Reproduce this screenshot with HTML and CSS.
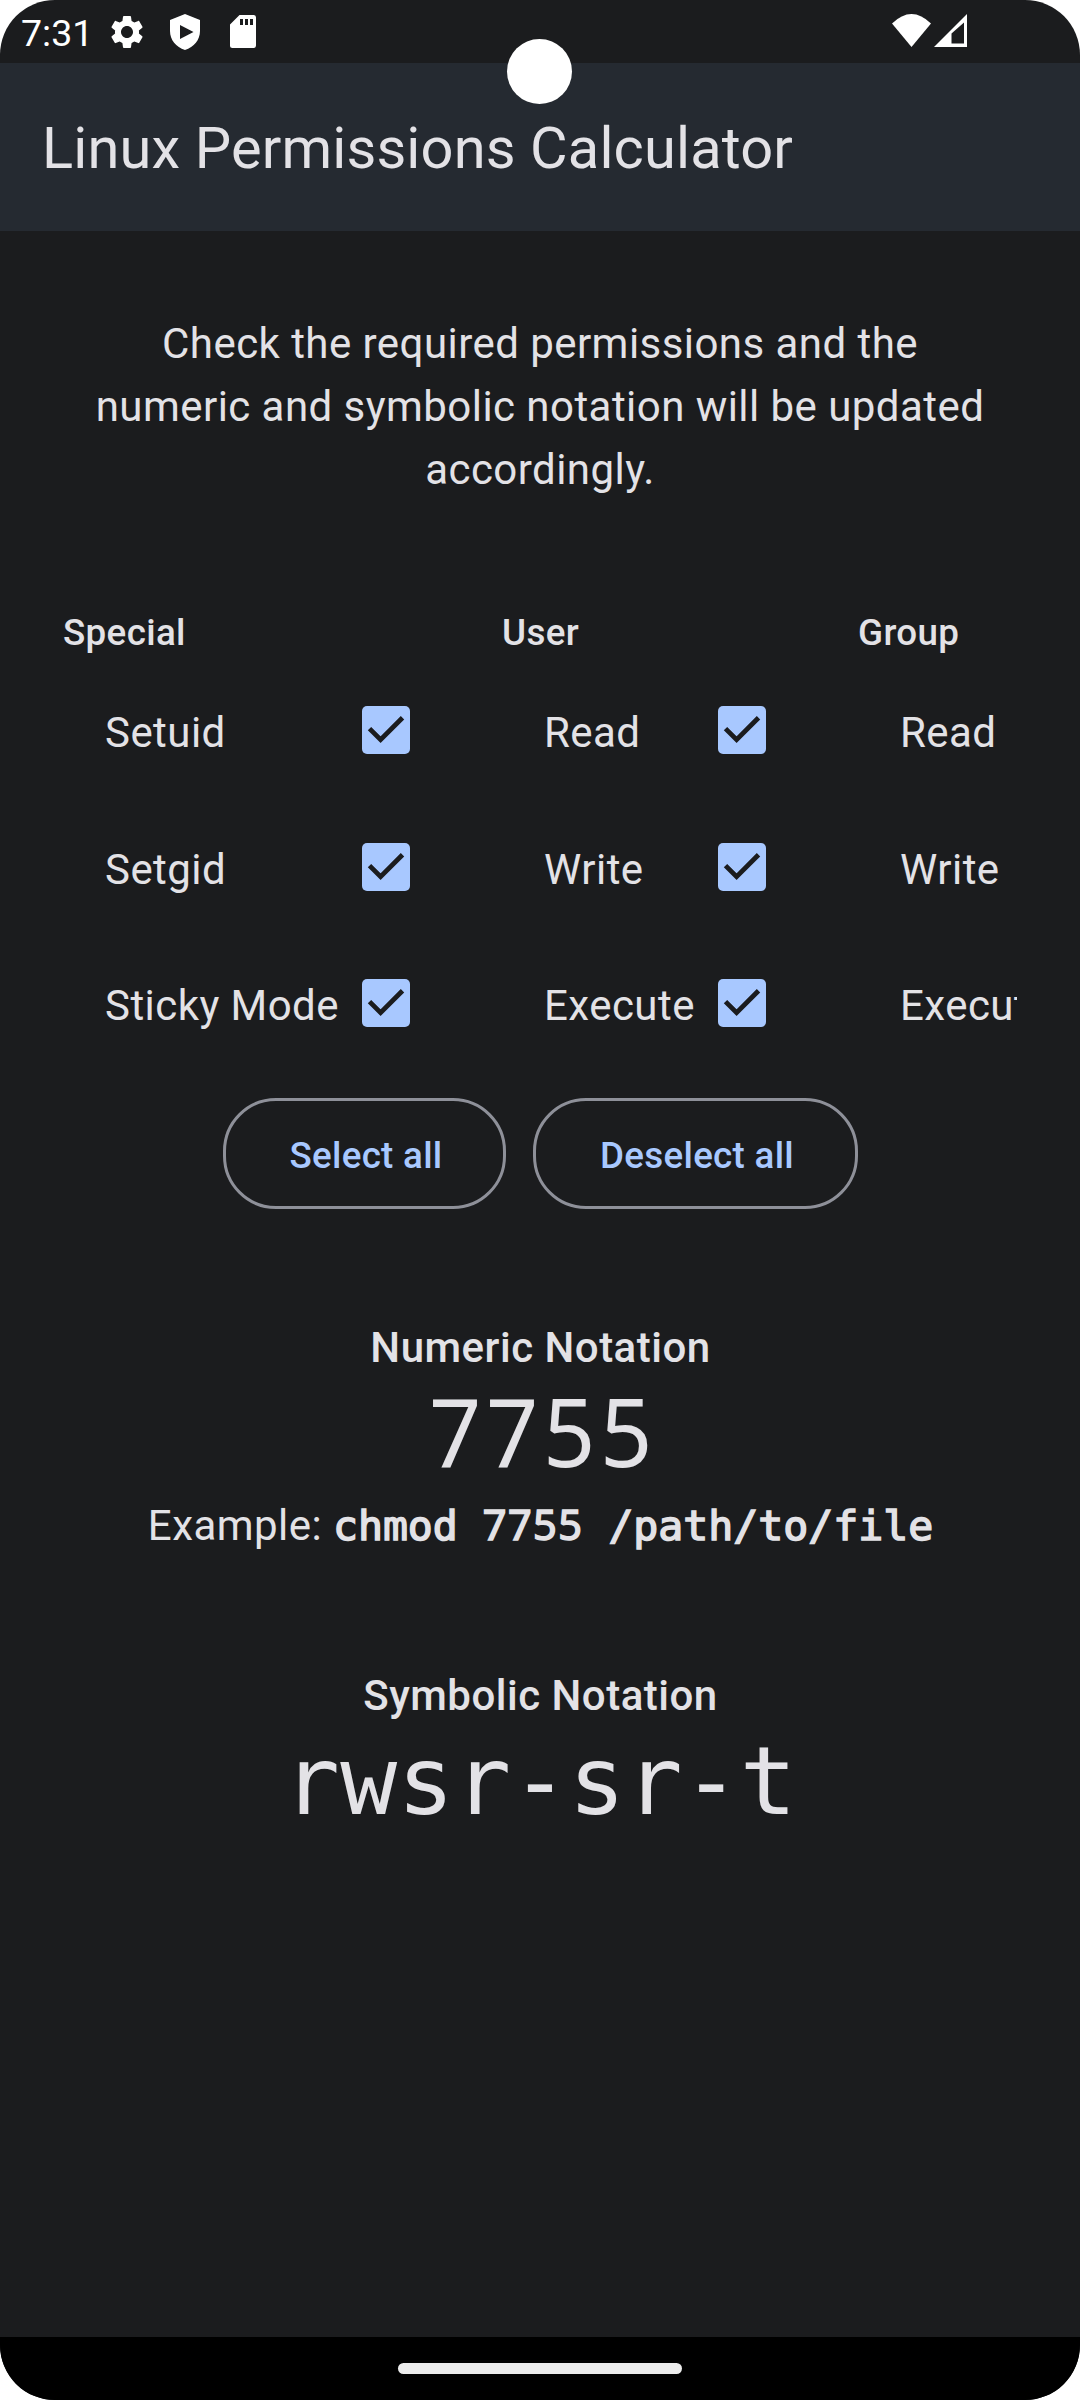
FILE: index.html
```html
<!DOCTYPE html>
<html lang="en">
<head>
<meta charset="utf-8">
<title>Linux Permissions Calculator</title>
<link rel="stylesheet" href="styles.css">
</head>
<body>
<svg width="0" height="0" class="defs">
  <symbol id="check" viewBox="0 0 48 48"><path d="M7.5 22.6 18.6 33.7 40.5 11.8" fill="none" stroke="#1b1c1e" stroke-width="4.8"/></symbol>
</svg>
<div class="screen">
  <div class="statusbar">
    <span class="time">7:31</span>
    <svg class="gear" viewBox="0 0 24 24"><path fill="#fff" d="M19.14 12.94c.04-.3.06-.61.06-.94 0-.32-.02-.64-.07-.94l2.03-1.58c.18-.14.23-.41.12-.61l-1.92-3.32c-.12-.22-.37-.29-.59-.22l-2.39.96c-.5-.38-1.03-.7-1.62-.94l-.36-2.54c-.04-.24-.24-.41-.48-.41h-3.84c-.24 0-.43.17-.47.41l-.36 2.54c-.59.24-1.13.57-1.62.94l-2.39-.96c-.22-.08-.47 0-.59.22L2.74 8.87c-.12.21-.08.47.12.61l2.03 1.58c-.05.3-.09.63-.09.94s.02.64.07.94l-2.03 1.58c-.18.14-.23.41-.12.61l1.92 3.32c.12.22.37.29.59.22l2.39-.96c.5.38 1.03.7 1.62.94l.36 2.54c.05.24.24.41.48.41h3.84c.24 0 .44-.17.47-.41l.36-2.54c.59-.24 1.13-.56 1.62-.94l2.39.96c.22.08.47 0 .59-.22l1.92-3.32c.12-.22.07-.47-.12-.61l-2.01-1.58zM12 15.6c-1.98 0-3.6-1.62-3.6-3.6s1.62-3.6 3.6-3.6 3.6 1.62 3.6 3.6-1.62 3.6-3.6 3.6z"/></svg>
    <svg class="shield" viewBox="0 0 30 36"><path fill="#fff" fill-rule="evenodd" d="M15 0 30 6V17C30 26 24 33 15 36 6 33 0 26 0 17V6ZM10 11V25L23.5 18Z"/></svg>
    <svg class="sd" viewBox="0 0 26 33"><path fill="#fff" fill-rule="evenodd" d="M9.5 0H23.5Q26 0 26 2.5V30.5Q26 33 23.5 33H2.5Q0 33 0 30.5V9.5ZM10 4V10H13V4ZM15 4V10H18V4ZM20 4V10H23V4Z"/></svg>
    <svg class="wifi" viewBox="0 0 39 33"><path fill="#fff" d="M0 9.5Q19.5-9.5 39 9.5L19.5 33Z"/></svg>
    <svg class="signal" viewBox="0 0 33 33"><path fill="#fff" fill-rule="evenodd" d="M33 0V33H0ZM30 8.5 17.5 19.5V29.5H30Z"/></svg>
    <span class="camera"></span>
  </div>
  <header class="appbar"><h1>Linux Permissions Calculator</h1></header>
  <main>
    <p class="intro">Check the required permissions and the numeric and symbolic notation will be updated accordingly.</p>
    <div class="table">
      <section class="col special">
        <h2>Special</h2>
        <div class="row"><span>Setuid</span><svg class="box"><use href="#check"/></svg></div>
        <div class="row"><span>Setgid</span><svg class="box"><use href="#check"/></svg></div>
        <div class="row"><span>Sticky Mode</span><svg class="box"><use href="#check"/></svg></div>
      </section>
      <section class="col">
        <h2>User</h2>
        <div class="row"><span>Read</span><svg class="box"><use href="#check"/></svg></div>
        <div class="row"><span>Write</span><svg class="box"><use href="#check"/></svg></div>
        <div class="row"><span>Execute</span><svg class="box"><use href="#check"/></svg></div>
      </section>
      <section class="col">
        <h2>Group</h2>
        <div class="row"><span>Read</span></div>
        <div class="row"><span>Write</span></div>
        <div class="row"><span>Execute</span></div>
      </section>
    </div>
    <div class="actions">
      <button class="select">Select all</button>
      <button class="deselect">Deselect all</button>
    </div>
    <h3>Numeric Notation</h3>
    <div class="numeric">7755</div>
    <p class="example">Example: <code>chmod <span class="num">7755</span> /path/to/file</code></p>
    <h3>Symbolic Notation</h3>
    <div class="symbolic">rwsr-sr-t</div>
  </main>
  <footer class="navbar"><span class="pill"></span></footer>
</div>
</body>
</html>
```
FILE: styles.css
```css
* { box-sizing: border-box; margin: 0; padding: 0; }
body { background: #fff; font-family: Roboto, sans-serif; color: #e3e2e6; }
.defs { position: absolute; }
.screen {
  width: 1080px; height: 2400px; border-radius: 55px; overflow: hidden;
  background: #1b1c1e; display: flex; flex-direction: column;
}
.statusbar { position: relative; height: 63px; flex: none; display: flex; align-items: flex-start; padding-left: 21px; }
.time { font-size: 37.5px; line-height: 43px; color: #fff; width: 86px; margin-top: 12px; white-space: nowrap; }
.gear { width: 40px; height: 40px; margin-top: 12px; }
.shield { width: 30px; height: 36px; margin: 14px 0 0 23px; }
.sd { width: 26px; height: 33px; margin: 15px 0 0 30px; }
.wifi { width: 39px; height: 33px; margin: 14px 0 0 auto; }
.signal { width: 33px; height: 33px; margin: 14px 113px 0 3px; }
.camera { position: absolute; left: 507px; top: 39px; width: 65px; height: 65px; border-radius: 50%; background: #fff; }
.appbar { height: 168px; flex: none; background: #252a31; padding: 48px 42px 0; }
.appbar h1 { font-size: 57.75px; line-height: 74px; font-weight: 400; letter-spacing: .15px; white-space: nowrap; }
main { flex: 1; padding: 81px 63px 0; }
.intro { font-size: 42px; line-height: 63px; letter-spacing: .45px; text-align: center; padding: 0 21px; }
.table { display: flex; margin-top: 103px; overflow: hidden; }
.col { width: 356px; flex: none; }
.col.special { width: 439px; }
.col h2 { font-size: 36.75px; line-height: 58px; height: 58px; font-weight: 500; letter-spacing: .35px; }
.row { height: 136.5px; padding: 0 92px 0 42px; display: flex; align-items: center; justify-content: space-between; font-size: 42px; letter-spacing: .45px; white-space: nowrap; }
.row span { padding-top: 5px; }
.box { width: 48px; height: 48px; flex: none; border-radius: 5px; background: #a8c8ff; }
.actions { display: flex; justify-content: center; gap: 27px; margin-top: 26px; }
.actions button {
  height: 111px; border: 3px solid #8e9099; border-radius: 53px; background: none; color: #a8c8ff;
  font: 500 36.75px Roboto, sans-serif; letter-spacing: .3px; padding: 4px 0 0 4px; white-space: nowrap;
}
.select { width: 283px; }
.deselect { width: 325px; }
h3 { font-size: 42px; line-height: 63px; font-weight: 500; letter-spacing: .5px; text-align: center; margin-top: 107px; padding-left: 1px; }
.numeric, .symbolic { font-size: 94.5px; text-align: center; }
.numeric { font-family: "Noto Sans", sans-serif; line-height: 103px; padding: 0 0 12px 6px; letter-spacing: 4.7px; transform: scaleX(.97); }
.symbolic { font-family: "DejaVu Sans Mono", monospace; line-height: 109px; letter-spacing: .2px; }
.example { font-size: 42px; line-height: 63px; letter-spacing: .45px; text-align: center; white-space: nowrap; padding-left: 1px; }
code { font: 400 41.5px "DejaVu Sans Mono", monospace; letter-spacing: 0; -webkit-text-stroke: 1.5px currentColor; }
.num { font-family: "Noto Sans", sans-serif; letter-spacing: 1.4px; }
.navbar { height: 63px; flex: none; background: #000; display: flex; justify-content: center; padding-top: 26px; }
.pill { width: 284px; height: 11px; border-radius: 6px; background: #ececec; }
```
